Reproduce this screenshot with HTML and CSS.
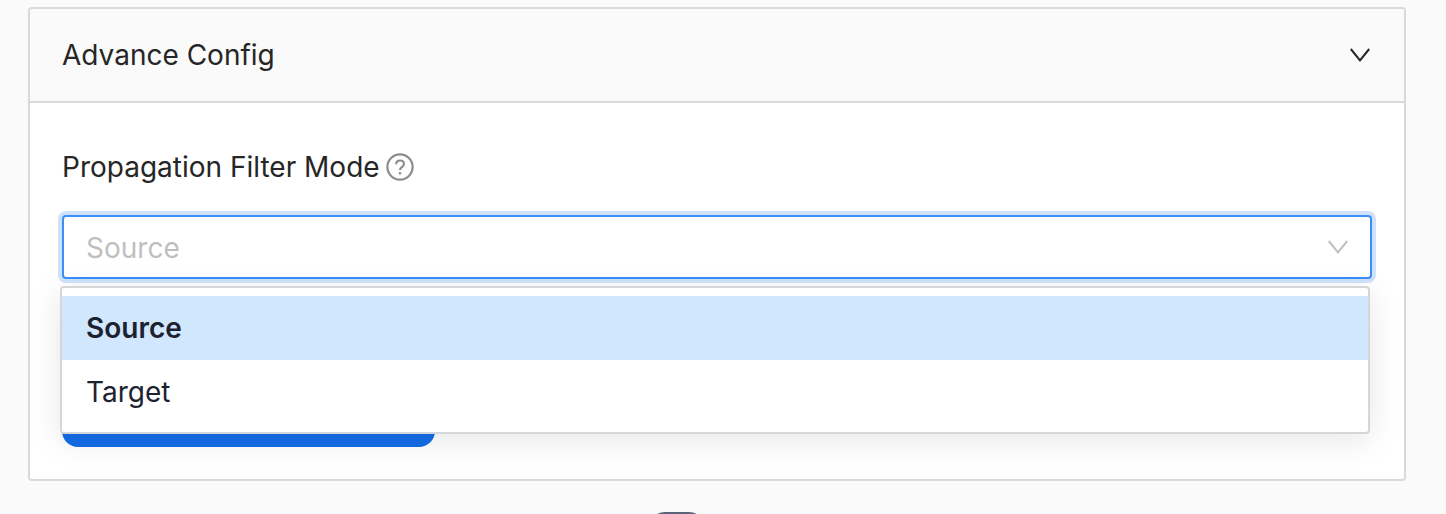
FILE: index.html
```html
<!DOCTYPE html>
<html lang="en">
<head>
<meta charset="utf-8">
<title>Advance Config</title>
<link rel="stylesheet" href="styles.css">
</head>
<body>
<main class="page">
  <section class="card">
    <header class="card-header">
      <h2 class="card-title">Advance Config</h2>
      <svg class="chevron" width="20" height="14" viewBox="0 0 20 14" aria-hidden="true"><path d="M.8 1 10 12.4 19.2 1"/></svg>
    </header>
    <div class="card-body">
      <div class="label-row">
        <label class="field-label">Propagation Filter Mode</label>
        <svg class="help" width="28" height="28" viewBox="0 0 28 28" aria-hidden="true">
          <circle cx="14" cy="14" r="12.6"/>
          <path d="M10.2 11.2c0-2.2 1.7-3.7 3.9-3.7s3.8 1.4 3.8 3.4c0 1.6-.9 2.4-2.1 3.2-1.2.8-1.8 1.4-1.8 2.8"/>
          <circle class="help-dot" cx="14" cy="20.2" r="1.3"/>
        </svg>
      </div>
      <div class="select-wrap">
        <div class="select">
          <span class="placeholder">Source</span>
          <svg class="chevron chevron-muted" width="20" height="14" viewBox="0 0 20 14" aria-hidden="true"><path d="M.8 1 10 12.4 19.2 1"/></svg>
        </div>
        <ul class="menu">
          <li class="option option-selected">Source</li>
          <li class="option">Target</li>
        </ul>
      </div>
      <button class="primary" type="button">Save</button>
    </div>
  </section>
  <div class="pill-row"><span class="pill"></span></div>
</main>
</body>
</html>
```
FILE: styles.css
```css
* { box-sizing: border-box; }
html, body { margin: 0; height: 514px; overflow: hidden; }
body {
  background: #fafafa;
  font-family: Inter, "Liberation Sans", sans-serif;
  color: #262626;
}
.page { padding: 7px 40px 0 28px; }
.card {
  width: 1378px;
  height: 474px;
  border: 2px solid #d9d9d9;
  border-radius: 4px;
  background: #fff;
}
.card-header {
  height: 94px;
  padding: 0 34px 0 32px;
  display: flex;
  align-items: center;
  justify-content: space-between;
  background: #fafafa;
  border-bottom: 2px solid #d9d9d9;
  border-radius: 2px 2px 0 0;
}
.card-title { margin: 0; font-size: 28px; font-weight: 400; line-height: 40px; }
.chevron { fill: none; stroke: #262626; stroke-width: 2; flex: none; }
.chevron-muted { stroke: #bfbfbf; }
.card-body { padding: 46px 32px 0; }
.label-row { display: flex; align-items: center; gap: 6px; height: 36px; }
.field-label { font-size: 28px; line-height: 36px; }
.help { fill: none; stroke: #8c8c8c; stroke-width: 2.2; }
.help-dot { fill: #8c8c8c; stroke: none; }
.select-wrap { position: relative; margin-top: 30px; }
.select {
  width: 1310px;
  height: 64px;
  padding: 0 22px;
  display: flex;
  align-items: center;
  justify-content: space-between;
  border: 2px solid #3a8ffa;
  border-radius: 4px;
  box-shadow: 0 0 0 4px #d0e2fb;
  background: #fff;
}
.placeholder { font-size: 28px; line-height: 36px; padding-top: 1px; color: #bfbfbf; }
.menu {
  position: absolute;
  left: -2px;
  top: 71px;
  width: 1310px;
  height: 148px;
  margin: 0;
  padding: 8px 0;
  list-style: none;
  background: #fff;
  border: 2px solid #d6d6da;
  border-radius: 4px;
  box-shadow: 0 6px 32px rgba(0, 0, 0, .1);
  z-index: 2;
}
.option {
  height: 64px;
  padding: 0 24px;
  display: flex;
  align-items: center;
  font-size: 28px;
  color: #1c2230;
}
.option-selected { background: #d1e7fe; font-weight: 600; }
.primary {
  display: block;
  width: 373px;
  height: 64px;
  margin-top: 104px;
  border: 0;
  border-radius: 16px;
  background: #136de8;
  color: #fff;
  font: 500 28px Inter, sans-serif;
}
.pill-row {
  display: flex;
  justify-content: center;
  height: 2px;
  margin-top: 31px;
  overflow: hidden;
}
.pill { flex: none; width: 56px; height: 32px; border-radius: 16px; background: #5b6478; margin-right: 80px; }
```
